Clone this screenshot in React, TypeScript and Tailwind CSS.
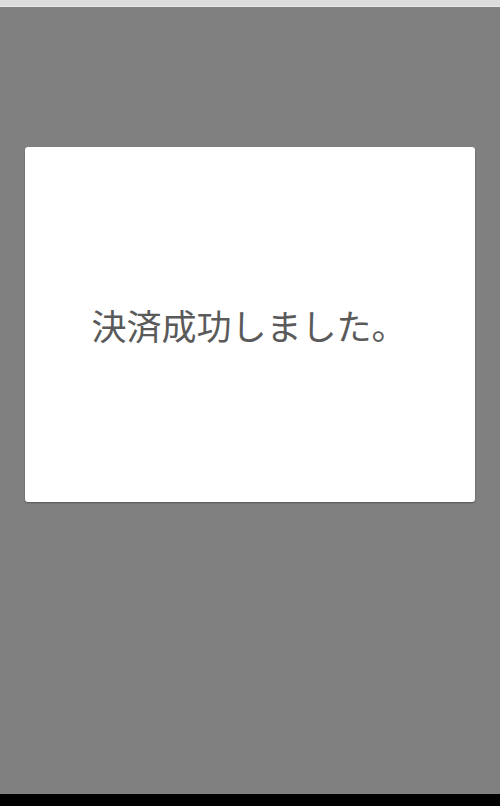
export default function App() {
  return (
    <div className="h-[806px] w-[500px] flex flex-col bg-[#808080] overflow-hidden">
      {/* status strip */}
      <div className="h-[7px] bg-[#dcdcdc] border-b border-[#e8e8e8]" />

      <div className="flex-1 px-[25px] pt-[140px]">
        <div className="h-[355px] bg-white rounded-[3px] shadow-[0_1px_2px_rgba(0,0,0,0.35)] flex items-center justify-center">
          <p
            className="text-[35px] leading-none text-[#5a5a5a] pr-[2px]"
            style={{ fontFamily: '"Noto Sans CJK JP", "Noto Sans", sans-serif' }}
          >
            決済成功しました。
          </p>
        </div>
      </div>

      {/* nav bar */}
      <div className="h-[12px] bg-black" />
    </div>
  );
}
